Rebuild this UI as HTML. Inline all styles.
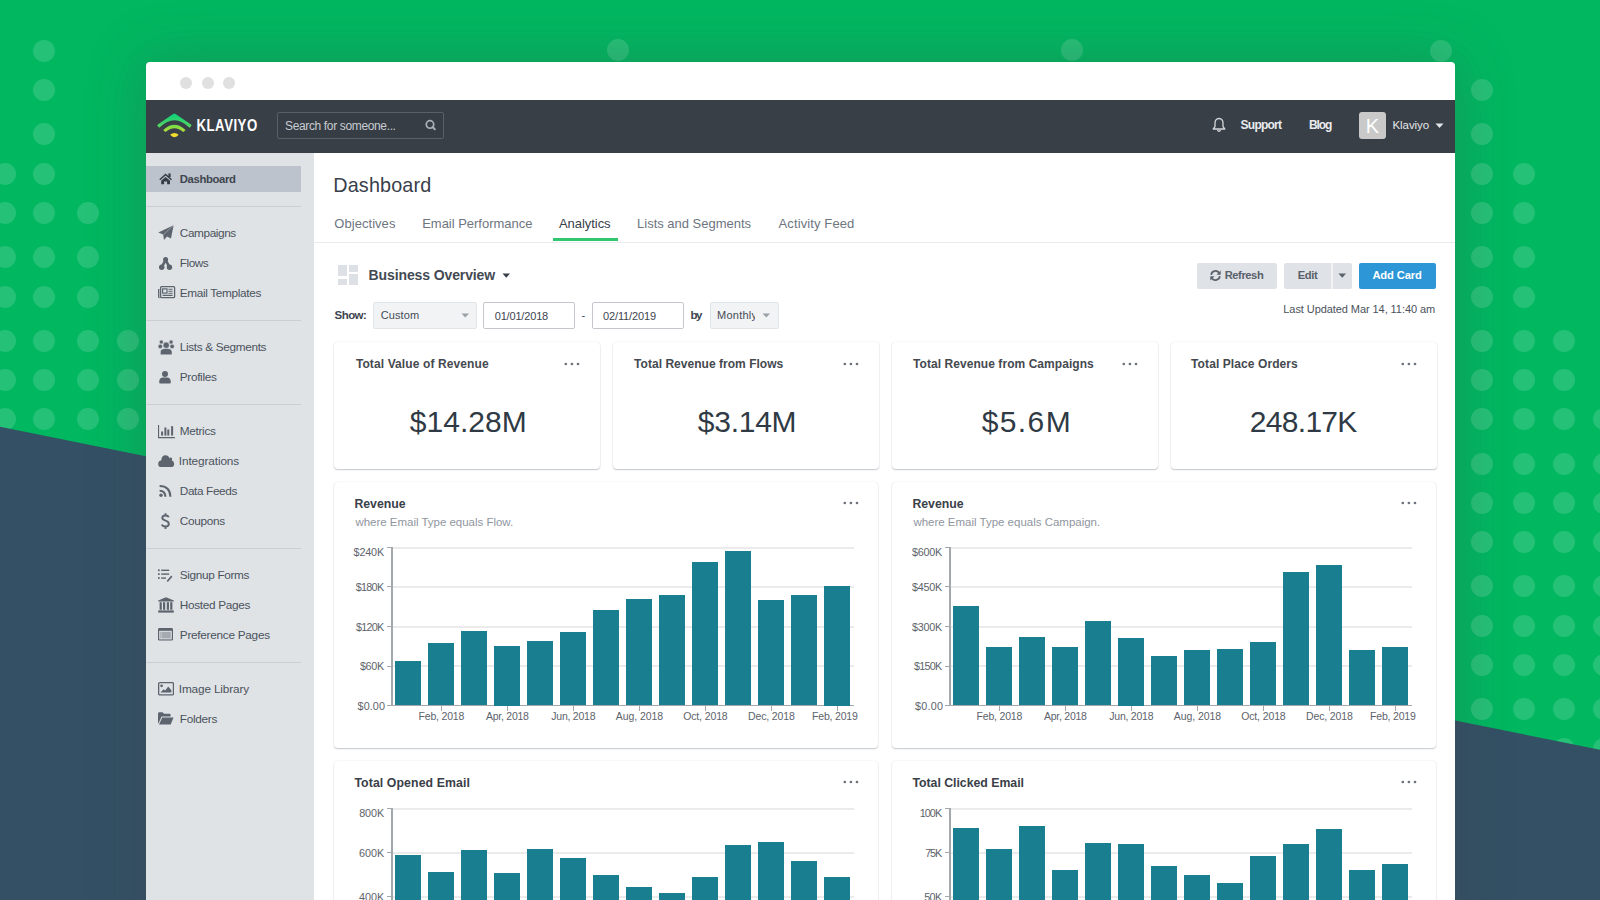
<!DOCTYPE html>
<html><head><meta charset='utf-8'><title>Klaviyo Dashboard</title>
<style>
html,body{margin:0;padding:0;}
body{width:1600px;height:900px;overflow:hidden;position:relative;background:#01b760;font-family:"Liberation Sans", sans-serif;}
.t{position:absolute;white-space:nowrap;font-family:"Liberation Sans", sans-serif;}
</style></head><body>
<svg width='1600' height='900' style='position:absolute;left:0;top:0'>
<g fill='#ffffff' fill-opacity='0.145'><circle cx='44' cy='51' r='11'/><circle cx='44' cy='90' r='11'/><circle cx='44' cy='134' r='11'/><circle cx='5' cy='174' r='11'/><circle cx='44' cy='174' r='11'/><circle cx='5' cy='213' r='11'/><circle cx='44' cy='213' r='11'/><circle cx='88' cy='213' r='11'/><circle cx='5' cy='257' r='11'/><circle cx='44' cy='257' r='11'/><circle cx='88' cy='257' r='11'/><circle cx='5' cy='297' r='11'/><circle cx='44' cy='297' r='11'/><circle cx='88' cy='297' r='11'/><circle cx='5' cy='341' r='11'/><circle cx='44' cy='341' r='11'/><circle cx='88' cy='341' r='11'/><circle cx='128' cy='341' r='11'/><circle cx='5' cy='380' r='11'/><circle cx='44' cy='380' r='11'/><circle cx='88' cy='380' r='11'/><circle cx='128' cy='380' r='11'/><circle cx='5' cy='419' r='11'/><circle cx='44' cy='419' r='11'/><circle cx='88' cy='419' r='11'/><circle cx='128' cy='419' r='11'/><circle cx='1482' cy='90' r='11'/><circle cx='1482' cy='134' r='11'/><circle cx='1482' cy='174' r='11'/><circle cx='1524' cy='174' r='11'/><circle cx='1482' cy='213' r='11'/><circle cx='1524' cy='213' r='11'/><circle cx='1482' cy='257' r='11'/><circle cx='1524' cy='257' r='11'/><circle cx='1482' cy='297' r='11'/><circle cx='1524' cy='297' r='11'/><circle cx='1482' cy='341' r='11'/><circle cx='1524' cy='341' r='11'/><circle cx='1564' cy='341' r='11'/><circle cx='1482' cy='380' r='11'/><circle cx='1524' cy='380' r='11'/><circle cx='1564' cy='380' r='11'/><circle cx='1482' cy='419' r='11'/><circle cx='1524' cy='419' r='11'/><circle cx='1564' cy='419' r='11'/><circle cx='1604' cy='419' r='11'/><circle cx='1482' cy='464' r='11'/><circle cx='1524' cy='464' r='11'/><circle cx='1564' cy='464' r='11'/><circle cx='1604' cy='464' r='11'/><circle cx='1482' cy='503' r='11'/><circle cx='1524' cy='503' r='11'/><circle cx='1564' cy='503' r='11'/><circle cx='1604' cy='503' r='11'/><circle cx='1482' cy='542' r='11'/><circle cx='1524' cy='542' r='11'/><circle cx='1564' cy='542' r='11'/><circle cx='1604' cy='542' r='11'/><circle cx='1482' cy='586' r='11'/><circle cx='1524' cy='586' r='11'/><circle cx='1564' cy='586' r='11'/><circle cx='1604' cy='586' r='11'/><circle cx='1482' cy='626' r='11'/><circle cx='1524' cy='626' r='11'/><circle cx='1564' cy='626' r='11'/><circle cx='1604' cy='626' r='11'/><circle cx='1482' cy='665' r='11'/><circle cx='1524' cy='665' r='11'/><circle cx='1564' cy='665' r='11'/><circle cx='1604' cy='665' r='11'/><circle cx='1482' cy='709' r='11'/><circle cx='1524' cy='709' r='11'/><circle cx='1564' cy='709' r='11'/><circle cx='1604' cy='709' r='11'/><circle cx='1482' cy='749' r='11'/><circle cx='1524' cy='749' r='11'/><circle cx='1564' cy='749' r='11'/><circle cx='1604' cy='749' r='11'/><circle cx='618' cy='50' r='11'/><circle cx='1072' cy='50' r='11'/><circle cx='1441' cy='51' r='11'/></g>
<polygon points='0,426.8 1600,749.8 1600,900 0,900' fill='#335064'/>
</svg><div style='position:absolute;left:146px;top:62px;width:1309px;height:900px;background:#fff;border-radius:4px 4px 0 0;box-shadow:0 0 55px 3px rgba(72,72,76,0.27)'></div><div style='position:absolute;left:180px;top:77px;width:12px;height:12px;border-radius:50%;background:#e0e0e0'></div><div style='position:absolute;left:202px;top:77px;width:12px;height:12px;border-radius:50%;background:#e0e0e0'></div><div style='position:absolute;left:223px;top:77px;width:12px;height:12px;border-radius:50%;background:#e0e0e0'></div><div style='position:absolute;left:146px;top:100px;width:1309px;height:52.5px;background:#393f47'></div><svg width='40' height='30' viewBox='0 0 40 30' style='position:absolute;left:155px;top:110px'>
<defs><linearGradient id='lg1' x1='0' y1='0' x2='0' y2='1'><stop offset='0' stop-color='#0bd17c'/><stop offset='1' stop-color='#5ad65e'/></linearGradient>
<linearGradient id='lg2' x1='0' y1='0' x2='0' y2='1'><stop offset='0' stop-color='#6fd84a'/><stop offset='1' stop-color='#b9e03a'/></linearGradient></defs>
<path d='M19.4 3.6 Q20 3.6 20.6 4 L36 14.4 Q37 15.2 36.2 16 L34.6 17.7 Q27 10.5 19.4 10.3 Q11.8 10.5 4.2 17.7 L2.6 16 Q1.8 15.2 2.8 14.4 L18.2 4 Q18.8 3.6 19.4 3.6 Z' fill='url(#lg1)'/>
<path d='M8.2 19.9 Q19.4 9.4 30.6 19.9 L28.4 22.1 Q19.4 14.4 10.4 22.1 Z' fill='url(#lg2)'/>
<path d='M15.1 24.7 Q19.4 21.3 23.7 24.7 Q21.8 26.9 19.4 27.3 Q17 26.9 15.1 24.7 Z' fill='#f1df2c'/>
</svg><div class='t' style='left:196.50px;top:119.78px;font-size:13.2px;line-height:13.2px;font-weight:700;color:#ffffff;letter-spacing:0.504px;transform:scaleY(1.22);transform-origin:0 11.22px;'>KLAVIYO</div><div style='position:absolute;left:277px;top:112px;width:165px;height:25px;border:1px solid #59606a;border-radius:2px;background:#373d45'></div><div class='t' style='left:285.00px;top:119.90px;font-size:12px;line-height:12px;font-weight:400;color:#c8ccd1;letter-spacing:-0.356px;'>Search for someone...</div><svg width='14' height='14' viewBox='0 0 14 14' style='position:absolute;left:424px;top:118px'>
<circle cx='6' cy='6.4' r='3.7' fill='none' stroke='#a9aeb5' stroke-width='1.8'/><line x1='8.6' y1='9' x2='10.8' y2='11.2' stroke='#a9aeb5' stroke-width='2' stroke-linecap='round'/></svg><svg width='14' height='16' viewBox='0 0 14 16' style='position:absolute;left:1212px;top:117px'>
<path d='M7 1.5 C4.2 1.5 3 3.6 3 6 L3 9.6 L1.2 12 L12.8 12 L11 9.6 L11 6 C11 3.6 9.8 1.5 7 1.5 Z' fill='none' stroke='#d5d8dc' stroke-width='1.3' stroke-linejoin='round'/>
<path d='M5.4 13.2 Q7 15.4 8.6 13.2' fill='none' stroke='#d5d8dc' stroke-width='1.3'/></svg><div class='t' style='left:1240.60px;top:119.30px;font-size:12px;line-height:12px;font-weight:700;color:#e9ebee;letter-spacing:-0.766px;'>Support</div><div class='t' style='left:1309.00px;top:119.30px;font-size:12px;line-height:12px;font-weight:700;color:#e9ebee;letter-spacing:-1.110px;'>Blog</div><div style='position:absolute;left:1359px;top:112px;width:27px;height:27px;border-radius:3px;background:#c9c9c9'></div><div class='t' style='left:1359px;top:113px;width:27px;text-align:center;font-size:20px;line-height:26px;font-weight:400;color:#fff'>K</div><div class='t' style='left:1392.50px;top:119.72px;font-size:11.5px;line-height:11.5px;font-weight:400;color:#e3e6e9;letter-spacing:-0.063px;'>Klaviyo</div><svg width='10' height='6' style='position:absolute;left:1434.5px;top:122.5px'><path d='M0.5 0.5 L8.5 0.5 L4.5 5 Z' fill='#e3e6e9'/></svg><div style='position:absolute;left:146px;top:152.5px;width:168px;height:747.5px;background:#dfe3e6'></div><div style='position:absolute;left:146px;top:166px;width:155px;height:26px;background:#bcc3cc'></div><div style='position:absolute;left:146px;top:206px;width:155px;height:1px;background:#c9ced4'></div><div style='position:absolute;left:146px;top:320px;width:155px;height:1px;background:#c9ced4'></div><div style='position:absolute;left:146px;top:404px;width:155px;height:1px;background:#c9ced4'></div><div style='position:absolute;left:146px;top:548px;width:155px;height:1px;background:#c9ced4'></div><div style='position:absolute;left:146px;top:662px;width:155px;height:1px;background:#c9ced4'></div><div class='t' style='left:179.80px;top:173.90px;font-size:11.3px;line-height:11.3px;font-weight:700;color:#3e454e;letter-spacing:-0.351px;'>Dashboard</div><div class='t' style='left:179.80px;top:227.87px;font-size:11.8px;line-height:11.8px;font-weight:400;color:#4b525c;letter-spacing:-0.409px;'>Campaigns</div><div class='t' style='left:179.80px;top:257.87px;font-size:11.8px;line-height:11.8px;font-weight:400;color:#4b525c;letter-spacing:-0.477px;'>Flows</div><div class='t' style='left:179.80px;top:287.87px;font-size:11.8px;line-height:11.8px;font-weight:400;color:#4b525c;letter-spacing:-0.346px;'>Email Templates</div><div class='t' style='left:179.80px;top:341.87px;font-size:11.8px;line-height:11.8px;font-weight:400;color:#4b525c;letter-spacing:-0.340px;'>Lists &amp; Segments</div><div class='t' style='left:179.80px;top:371.87px;font-size:11.8px;line-height:11.8px;font-weight:400;color:#4b525c;letter-spacing:-0.334px;'>Profiles</div><div class='t' style='left:179.80px;top:425.87px;font-size:11.8px;line-height:11.8px;font-weight:400;color:#4b525c;letter-spacing:-0.319px;'>Metrics</div><div class='t' style='left:178.80px;top:455.87px;font-size:11.8px;line-height:11.8px;font-weight:400;color:#4b525c;letter-spacing:-0.113px;'>Integrations</div><div class='t' style='left:179.80px;top:485.87px;font-size:11.8px;line-height:11.8px;font-weight:400;color:#4b525c;letter-spacing:-0.387px;'>Data Feeds</div><div class='t' style='left:179.80px;top:515.87px;font-size:11.8px;line-height:11.8px;font-weight:400;color:#4b525c;letter-spacing:-0.304px;'>Coupons</div><div class='t' style='left:179.80px;top:569.87px;font-size:11.8px;line-height:11.8px;font-weight:400;color:#4b525c;letter-spacing:-0.339px;'>Signup Forms</div><div class='t' style='left:179.80px;top:599.87px;font-size:11.8px;line-height:11.8px;font-weight:400;color:#4b525c;letter-spacing:-0.310px;'>Hosted Pages</div><div class='t' style='left:179.80px;top:629.87px;font-size:11.8px;line-height:11.8px;font-weight:400;color:#4b525c;letter-spacing:-0.276px;'>Preference Pages</div><div class='t' style='left:178.80px;top:683.87px;font-size:11.8px;line-height:11.8px;font-weight:400;color:#4b525c;letter-spacing:-0.152px;'>Image Library</div><div class='t' style='left:179.80px;top:713.87px;font-size:11.8px;line-height:11.8px;font-weight:400;color:#4b525c;letter-spacing:-0.306px;'>Folders</div><div style='position:absolute;left:158.5px;top:172.8px;line-height:0'><svg width='14' height='12' viewBox='0 0 14 12'><path d='M0.3 6.3 L6.6 0.6 L13 6.3 L12 7.3 L6.6 2.6 L1.3 7.3 Z' fill='#363d47'/><rect x='9.4' y='0.4' width='2.2' height='3.6' fill='#363d47'/><path d='M2.2 7.7 L6.6 3.9 L11 7.7 L11 11.3 L8.1 11.3 L8.1 8.4 L5.1 8.4 L5.1 11.3 L2.2 11.3 Z' fill='#363d47'/></svg></div><div style='position:absolute;left:157.5px;top:225.3px;line-height:0'><svg width='17' height='16' viewBox='0 0 17 16'><path d='M15.6 0.2 L0.3 7.6 L5.2 9.4 L6 15 L9 11.6 L13 13.6 Z' fill='#5d646e'/><path d='M15.6 0.2 L5.6 9.6' stroke='#dfe3e6' stroke-width='0.7' opacity='0.6'/></svg></div><div style='position:absolute;left:158.8px;top:256.8px;line-height:0'><svg width='14' height='14' viewBox='0 0 14 14'><circle cx='6.6' cy='2.6' r='2.5' fill='#5d646e'/><circle cx='2.7' cy='10.3' r='2.7' fill='#5d646e'/><circle cx='10.5' cy='10.3' r='2.7' fill='#5d646e'/><path d='M6.6 2.8 L2.7 10.3 M6.6 2.8 L10.5 10.3' stroke='#5d646e' stroke-width='2.6'/></svg></div><div style='position:absolute;left:157.8px;top:286.3px;line-height:0'><svg width='18' height='13' viewBox='0 0 18 13'><rect x='2.6' y='0.7' width='14' height='11' rx='1' fill='none' stroke='#5d646e' stroke-width='1.3'/><path d='M0.7 3 L0.7 10.9 Q0.7 11.7 1.6 11.7' fill='none' stroke='#5d646e' stroke-width='1.3'/><rect x='4.6' y='2.9' width='4.4' height='4.2' fill='none' stroke='#5d646e' stroke-width='1.2'/><path d='M10.4 3.3 H14.6 M10.4 5.3 H14.6 M10.4 7.3 H14.6 M4.6 9.4 H14.6' stroke='#5d646e' stroke-width='1.1'/></svg></div><div style='position:absolute;left:157.6px;top:339.6px;line-height:0'><svg width='17' height='15' viewBox='0 0 17 15'><g fill='#5d646e' stroke='#dfe3e6' stroke-width='0.5'><circle cx='3.3' cy='2.1' r='2'/><circle cx='13.1' cy='2.1' r='2'/><circle cx='2.3' cy='6.4' r='2.2'/><circle cx='14.1' cy='6.4' r='2.2'/><circle cx='8.2' cy='5.2' r='3.1'/><path d='M2.4 14.8 L2.4 11.9 Q2.4 8.5 8.2 8.5 Q14 8.5 14 11.9 L14 14.8 Z'/></g></svg></div><div style='position:absolute;left:159.2px;top:370.6px;line-height:0'><svg width='12' height='13' viewBox='0 0 12 13'><circle cx='6' cy='3.1' r='3' fill='#5d646e'/><path d='M0.2 11 Q0.2 6.6 4 6.5 L8 6.5 Q11.8 6.6 11.8 11 L11.8 11.6 Q11.8 12.6 10.8 12.6 L1.2 12.6 Q0.2 12.6 0.2 11.6 Z' fill='#5d646e'/></svg></div><div style='position:absolute;left:157.8px;top:424.6px;line-height:0'><svg width='17' height='14' viewBox='0 0 17 14'><path d='M0.55 0 V12.6 H16.9' fill='none' stroke='#5d646e' stroke-width='1.1'/><rect x='3.1' y='6.5' width='2' height='4.1' fill='#5d646e'/><rect x='6.4' y='2.5' width='2' height='8.1' fill='#5d646e'/><rect x='9.3' y='4.5' width='2' height='6.1' fill='#5d646e'/><rect x='13.1' y='1.2' width='2' height='9.4' fill='#5d646e'/></svg></div><div style='position:absolute;left:157.8px;top:454.6px;line-height:0'><svg width='17' height='13' viewBox='0 0 17 13'><path d='M3.5 12.1 Q0.2 12.1 0.2 8.9 Q0.2 5.9 3.2 5.6 Q3.6 0.2 7.6 0.2 Q10.6 0.2 11.4 3.1 Q12.4 2 13.4 2.6 Q14.4 3.2 14 5.4 Q16.2 6.2 16.2 9 Q16.2 12.1 13 12.1 Z' fill='#5d646e'/></svg></div><div style='position:absolute;left:158.8px;top:484.6px;line-height:0'><svg width='13' height='13' viewBox='0 0 13 13'><circle cx='2' cy='10.2' r='1.7' fill='#5d646e'/><path d='M0.6 5.7 Q6.2 5.7 6.4 11.8' fill='none' stroke='#5d646e' stroke-width='2'/><path d='M0.6 1.1 Q11 1.1 11.4 11.8' fill='none' stroke='#5d646e' stroke-width='2'/></svg></div><div style='position:absolute;left:161px;top:512.5px;line-height:0'><svg width='9' height='16' viewBox='0 0 9 16'><path d='M7.7 4.3 Q7.1 2.5 4.5 2.5 Q1.3 2.5 1.3 4.8 Q1.3 6.8 4.5 7.6 Q7.8 8.4 7.8 11 Q7.8 13.5 4.5 13.5 Q1.5 13.5 0.9 11.5 M4.5 0.2 V2.5 M4.5 13.5 V16' fill='none' stroke='#5d646e' stroke-width='1.9'/></svg></div><div style='position:absolute;left:158.2px;top:569px;line-height:0'><svg width='15' height='14' viewBox='0 0 15 14'><rect x='0' y='0.4' width='1.7' height='1.7' fill='#5d646e'/><rect x='0' y='4.2' width='1.7' height='1.7' fill='#5d646e'/><rect x='0' y='8.2' width='1.7' height='1.7' fill='#5d646e'/><rect x='3.2' y='0.6' width='8' height='1.4' fill='#5d646e'/><rect x='3.2' y='4.4' width='8' height='1.4' fill='#5d646e'/><rect x='3.2' y='8.4' width='4.8' height='1.4' fill='#5d646e'/><path d='M8.6 11.9 L13.2 6.6 L14.4 7.8 L9.8 13 Z' fill='#5d646e'/></svg></div><div style='position:absolute;left:158px;top:597px;line-height:0'><svg width='16' height='16' viewBox='0 0 16 16'><path d='M8 0.2 L15.8 3.6 L15.8 4.6 L0.2 4.6 L0.2 3.6 Z' fill='#5d646e'/><rect x='1.6' y='5.2' width='2.2' height='7.6' fill='#5d646e'/><rect x='5' y='5.2' width='2.2' height='7.6' fill='#5d646e'/><rect x='8.8' y='5.2' width='2.2' height='7.6' fill='#5d646e'/><rect x='12.2' y='5.2' width='2.2' height='7.6' fill='#5d646e'/><rect x='0.2' y='13.4' width='15.6' height='2.2' fill='#5d646e'/></svg></div><div style='position:absolute;left:158px;top:628px;line-height:0'><svg width='15' height='13' viewBox='0 0 15 13'><rect x='0' y='0' width='15' height='12.6' rx='1.4' fill='#5d646e'/><rect x='1.2' y='2.8' width='12.6' height='8.6' fill='#dfe3e6'/><rect x='3.4' y='3.8' width='9.4' height='6.6' fill='#5d646e' fill-opacity='0.45'/><rect x='2' y='3.8' width='0.8' height='6.6' fill='#5d646e' fill-opacity='0.45'/></svg></div><div style='position:absolute;left:158.3px;top:682.2px;line-height:0'><svg width='16' height='14' viewBox='0 0 16 14'><rect x='0.65' y='0.65' width='14.8' height='12.3' rx='1.2' fill='none' stroke='#5d646e' stroke-width='1.3'/><circle cx='3.6' cy='3.8' r='1.4' fill='#5d646e'/><path d='M2.4 10.6 L5.6 7.2 L7.2 8.6 L10.2 4.6 L13.4 8.2 L13.4 10.6 Z' fill='#5d646e'/></svg></div><div style='position:absolute;left:158px;top:712px;line-height:0'><svg width='16' height='13' viewBox='0 0 16 13'><path d='M0 1.4 Q0 0.2 1.2 0.2 L4.6 0.2 L6 1.8 L11.6 1.8 Q12.6 1.8 12.6 3 L12.6 4.6 L3.6 4.6 L0.4 11.4 L0 11 Z' fill='#5d646e'/><path d='M1 12.4 L4.2 5.6 L15.6 5.6 L12.6 12.4 Z' fill='#5d646e'/></svg></div><div class='t' style='left:333.30px;top:175.67px;font-size:19.8px;line-height:19.8px;font-weight:400;color:#39404a;letter-spacing:0.141px;'>Dashboard</div><div class='t' style='left:334.30px;top:216.95px;font-size:13px;line-height:13px;font-weight:400;color:#6e757f;letter-spacing:0.046px;'>Objectives</div><div class='t' style='left:422.20px;top:216.95px;font-size:13px;line-height:13px;font-weight:400;color:#6e757f;letter-spacing:-0.019px;'>Email Performance</div><div class='t' style='left:559.00px;top:216.95px;font-size:13px;line-height:13px;font-weight:400;color:#39404a;letter-spacing:-0.052px;'>Analytics</div><div class='t' style='left:637.10px;top:216.95px;font-size:13px;line-height:13px;font-weight:400;color:#6e757f;letter-spacing:-0.016px;'>Lists and Segments</div><div class='t' style='left:778.50px;top:216.95px;font-size:13px;line-height:13px;font-weight:400;color:#6e757f;letter-spacing:0.118px;'>Activity Feed</div><div style='position:absolute;left:314px;top:242px;width:1141px;height:1px;background:#e8eaed'></div><div style='position:absolute;left:553px;top:238px;width:65px;height:3px;background:#2ec76f'></div><div style='position:absolute;left:338px;top:265.3px;width:8.7px;height:11.2px;background:#dde0e4'></div><div style='position:absolute;left:338px;top:278.8px;width:8.7px;height:6.4px;background:#dde0e4'></div><div style='position:absolute;left:349px;top:265.3px;width:8.8px;height:6.5px;background:#dde0e4'></div><div style='position:absolute;left:349px;top:274.2px;width:8.8px;height:11px;background:#dde0e4'></div><div class='t' style='left:368.60px;top:268.10px;font-size:14px;line-height:14px;font-weight:700;color:#434a53;letter-spacing:-0.113px;'>Business Overview</div><svg width='9' height='6' style='position:absolute;left:502px;top:273px'><path d='M0.5 0.5 L8 0.5 L4.25 4.8 Z' fill='#39404a'/></svg><div class='t' style='left:334.60px;top:309.73px;font-size:11.5px;line-height:11.5px;font-weight:700;color:#3e454f;letter-spacing:-0.566px;'>Show:</div><div style='position:absolute;left:373px;top:302px;width:102px;height:25px;background:#f1f3f5;border:1px solid #e2e5e8;border-radius:2px'></div><div class='t' style='left:380.70px;top:310.15px;font-size:11px;line-height:11px;font-weight:400;color:#454c56;letter-spacing:0.093px;'>Custom</div><svg width='9' height='6' style='position:absolute;left:460.5px;top:313px'><path d='M0.5 0.5 L8 0.5 L4.25 4.5 Z' fill='#9aa0a7'/></svg><div style='position:absolute;left:483px;top:302px;width:90px;height:25px;background:#fff;border:1px solid #c4c8cd;border-radius:2px'></div><div class='t' style='left:494.70px;top:310.65px;font-size:11px;line-height:11px;font-weight:400;color:#3e454f;letter-spacing:-0.171px;'>01/01/2018</div><div class='t' style='left:581.50px;top:309.65px;font-size:11px;line-height:11px;font-weight:400;color:#3e454f;'>-</div><div style='position:absolute;left:592px;top:302px;width:90px;height:25px;background:#fff;border:1px solid #c4c8cd;border-radius:2px'></div><div class='t' style='left:603.00px;top:310.65px;font-size:11px;line-height:11px;font-weight:400;color:#3e454f;letter-spacing:-0.124px;'>02/11/2019</div><div class='t' style='left:690.60px;top:309.73px;font-size:11.5px;line-height:11.5px;font-weight:700;color:#3e454f;letter-spacing:-1.625px;'>by</div><div style='position:absolute;left:710px;top:302px;width:67px;height:25px;background:#f1f3f5;border:1px solid #e2e5e8;border-radius:2px;overflow:hidden'></div><div style='position:absolute;left:717px;top:302px;width:38px;height:27px;overflow:hidden'><div class='t' style='left:0;top:8.15px;font-size:11px;line-height:11px;color:#454c56;letter-spacing:0.25px'>Monthly</div></div><svg width='9' height='6' style='position:absolute;left:762px;top:313px'><path d='M0.5 0.5 L8 0.5 L4.25 4.5 Z' fill='#9aa0a7'/></svg><div style='position:absolute;left:1197px;top:263px;width:80px;height:26px;background:#dfe2e6;border-radius:2px'></div><svg width='11' height='11' viewBox='0 0 10 10' style='position:absolute;left:1210.3px;top:269.6px'>
<path d='M1.1 4.4 A3.9 3.9 0 0 1 8.2 2.6' fill='none' stroke='#59616c' stroke-width='1.6'/><path d='M9.7 0.5 L9.7 4.3 L5.9 4.3 Z' fill='#59616c'/>
<path d='M8.9 5.6 A3.9 3.9 0 0 1 1.8 7.4' fill='none' stroke='#59616c' stroke-width='1.6'/><path d='M0.3 9.5 L0.3 5.7 L4.1 5.7 Z' fill='#59616c'/></svg><div class='t' style='left:1224.70px;top:269.98px;font-size:11.2px;line-height:11.2px;font-weight:700;color:#58606b;letter-spacing:-0.437px;'>Refresh</div><div style='position:absolute;left:1284px;top:263px;width:68px;height:26px;background:#dfe2e6;border-radius:2px'></div><div style='position:absolute;left:1331px;top:263px;width:2px;height:26px;background:#f2f3f5'></div><div class='t' style='left:1297.80px;top:269.98px;font-size:11.2px;line-height:11.2px;font-weight:700;color:#58606b;letter-spacing:-0.401px;'>Edit</div><svg width='9' height='6' style='position:absolute;left:1338px;top:272.5px'><path d='M0.5 0.5 L8 0.5 L4.25 4.8 Z' fill='#59616c'/></svg><div style='position:absolute;left:1359px;top:263px;width:77px;height:26px;background:#2d96d6;border-radius:2px'></div><div class='t' style='left:1372.40px;top:269.98px;font-size:11.2px;line-height:11.2px;font-weight:700;color:#ffffff;letter-spacing:-0.130px;'>Add Card</div><div class='t' style='left:1283.30px;top:304.15px;font-size:11px;line-height:11px;font-weight:400;color:#4b525b;letter-spacing:-0.072px;'>Last Updated Mar 14, 11:40 am</div><div style='position:absolute;left:334.1px;top:341.8px;width:266.0px;height:127.19999999999999px;background:#fff;border-radius:4px;box-shadow:0 1px 1.5px rgba(40,50,65,0.26), 0 0 1.5px rgba(40,50,65,0.12)'></div><div class='t' style='left:355.90px;top:358.10px;font-size:12px;line-height:12px;font-weight:700;color:#45494f;letter-spacing:0.105px;'>Total Value of Revenue</div><svg width='16' height='6' style='position:absolute;left:564.00px;top:361.00px'><g fill='#6d737b'><circle cx='1.8' cy='3' r='1.35'/><circle cx='7.9' cy='3' r='1.35'/><circle cx='14' cy='3' r='1.35'/></g></svg><div class='t' style='left:409.80px;top:407.00px;font-size:30px;line-height:30px;font-weight:400;color:#2f3a45;letter-spacing:0.040px;'>$14.28M</div><div style='position:absolute;left:613.0px;top:341.8px;width:266.0px;height:127.19999999999999px;background:#fff;border-radius:4px;box-shadow:0 1px 1.5px rgba(40,50,65,0.26), 0 0 1.5px rgba(40,50,65,0.12)'></div><div class='t' style='left:634.10px;top:358.10px;font-size:12px;line-height:12px;font-weight:700;color:#45494f;letter-spacing:0.031px;'>Total Revenue from Flows</div><svg width='16' height='6' style='position:absolute;left:842.90px;top:361.00px'><g fill='#6d737b'><circle cx='1.8' cy='3' r='1.35'/><circle cx='7.9' cy='3' r='1.35'/><circle cx='14' cy='3' r='1.35'/></g></svg><div class='t' style='left:697.80px;top:407.00px;font-size:30px;line-height:30px;font-weight:400;color:#2f3a45;letter-spacing:-0.255px;'>$3.14M</div><div style='position:absolute;left:892.0px;top:341.8px;width:266.0px;height:127.19999999999999px;background:#fff;border-radius:4px;box-shadow:0 1px 1.5px rgba(40,50,65,0.26), 0 0 1.5px rgba(40,50,65,0.12)'></div><div class='t' style='left:913.10px;top:358.10px;font-size:12px;line-height:12px;font-weight:700;color:#45494f;letter-spacing:0.057px;'>Total Revenue from Campaigns</div><svg width='16' height='6' style='position:absolute;left:1121.90px;top:361.00px'><g fill='#6d737b'><circle cx='1.8' cy='3' r='1.35'/><circle cx='7.9' cy='3' r='1.35'/><circle cx='14' cy='3' r='1.35'/></g></svg><div class='t' style='left:981.70px;top:407.00px;font-size:30px;line-height:30px;font-weight:400;color:#2f3a45;letter-spacing:1.403px;'>$5.6M</div><div style='position:absolute;left:1170.8999999999999px;top:341.8px;width:266.0000000000002px;height:127.19999999999999px;background:#fff;border-radius:4px;box-shadow:0 1px 1.5px rgba(40,50,65,0.26), 0 0 1.5px rgba(40,50,65,0.12)'></div><div class='t' style='left:1191.10px;top:358.10px;font-size:12px;line-height:12px;font-weight:700;color:#45494f;letter-spacing:0.089px;'>Total Place Orders</div><svg width='16' height='6' style='position:absolute;left:1400.80px;top:361.00px'><g fill='#6d737b'><circle cx='1.8' cy='3' r='1.35'/><circle cx='7.9' cy='3' r='1.35'/><circle cx='14' cy='3' r='1.35'/></g></svg><div class='t' style='left:1249.85px;top:407.00px;font-size:30px;line-height:30px;font-weight:400;color:#2f3a45;letter-spacing:-0.710px;'>248.17K</div><div style='position:absolute;left:334.2px;top:481.7px;width:543.8px;height:265.90000000000003px;background:#fff;border-radius:4px;box-shadow:0 1px 1.5px rgba(40,50,65,0.26), 0 0 1.5px rgba(40,50,65,0.12)'></div><div class='t' style='left:354.40px;top:497.75px;font-size:12.3px;line-height:12.3px;font-weight:700;color:#3a4048;letter-spacing:-0.003px;'>Revenue</div><div class='t' style='left:355.40px;top:516.52px;font-size:11.5px;line-height:11.5px;font-weight:400;color:#90969e;letter-spacing:-0.019px;'>where Email Type equals Flow.</div><svg width='16' height='6' style='position:absolute;left:842.50px;top:500.30px'><g fill='#6d737b'><circle cx='1.8' cy='3' r='1.35'/><circle cx='7.9' cy='3' r='1.35'/><circle cx='14' cy='3' r='1.35'/></g></svg><div style='position:absolute;left:392px;top:546.5px;width:462px;height:2.0px;background:#ebebeb'></div><div style='position:absolute;left:387px;top:547px;width:5px;height:1px;background:#a3a8ad'></div><div class='t' style='left:353.60px;top:546.62px;font-size:10.8px;line-height:10.8px;font-weight:400;color:#5d636b;letter-spacing:-0.180px;'>$240K</div><div style='position:absolute;left:392px;top:586.0px;width:462px;height:2.0px;background:#ebebeb'></div><div style='position:absolute;left:387px;top:586px;width:5px;height:1px;background:#a3a8ad'></div><div class='t' style='left:355.80px;top:582.12px;font-size:10.8px;line-height:10.8px;font-weight:400;color:#5d636b;letter-spacing:-0.730px;'>$180K</div><div style='position:absolute;left:392px;top:625.5px;width:462px;height:2.0px;background:#ebebeb'></div><div style='position:absolute;left:387px;top:626px;width:5px;height:1px;background:#a3a8ad'></div><div class='t' style='left:356.00px;top:621.62px;font-size:10.8px;line-height:10.8px;font-weight:400;color:#5d636b;letter-spacing:-0.780px;'>$120K</div><div style='position:absolute;left:392px;top:665.0px;width:462px;height:2.0px;background:#ebebeb'></div><div style='position:absolute;left:387px;top:666px;width:5px;height:1px;background:#a3a8ad'></div><div class='t' style='left:359.90px;top:661.12px;font-size:10.8px;line-height:10.8px;font-weight:400;color:#5d636b;letter-spacing:-0.338px;'>$60K</div><div style='position:absolute;left:392px;top:705px;width:462px;height:1px;background:#a3a8ad'></div><div style='position:absolute;left:387px;top:705px;width:5px;height:1px;background:#a3a8ad'></div><div class='t' style='left:357.60px;top:700.62px;font-size:10.8px;line-height:10.8px;font-weight:400;color:#5d636b;letter-spacing:0.072px;'>$0.00</div><div style='position:absolute;left:391px;top:547px;width:1.5px;height:159px;background:#a3a8ad'></div><div style='position:absolute;left:395.10px;top:660.70px;width:25.6px;height:44.80px;background:#1a7e91'></div><div style='position:absolute;left:428.10px;top:642.70px;width:25.6px;height:62.80px;background:#1a7e91'></div><div style='position:absolute;left:461.10px;top:630.80px;width:25.6px;height:74.70px;background:#1a7e91'></div><div style='position:absolute;left:494.10px;top:645.50px;width:25.6px;height:60.00px;background:#1a7e91'></div><div style='position:absolute;left:527.10px;top:640.80px;width:25.6px;height:64.70px;background:#1a7e91'></div><div style='position:absolute;left:560.10px;top:632.20px;width:25.6px;height:73.30px;background:#1a7e91'></div><div style='position:absolute;left:593.10px;top:610.10px;width:25.6px;height:95.40px;background:#1a7e91'></div><div style='position:absolute;left:626.10px;top:599.20px;width:25.6px;height:106.30px;background:#1a7e91'></div><div style='position:absolute;left:659.10px;top:594.60px;width:25.6px;height:110.90px;background:#1a7e91'></div><div style='position:absolute;left:692.10px;top:562.20px;width:25.6px;height:143.30px;background:#1a7e91'></div><div style='position:absolute;left:725.10px;top:550.70px;width:25.6px;height:154.80px;background:#1a7e91'></div><div style='position:absolute;left:758.10px;top:599.70px;width:25.6px;height:105.80px;background:#1a7e91'></div><div style='position:absolute;left:791.10px;top:595.10px;width:25.6px;height:110.40px;background:#1a7e91'></div><div style='position:absolute;left:824.10px;top:586.00px;width:25.6px;height:119.50px;background:#1a7e91'></div><div style='position:absolute;left:441px;top:706px;width:1px;height:5px;background:#a3a8ad'></div><div class='t' style='left:418.50px;top:711.38px;font-size:10.5px;line-height:10.5px;font-weight:400;color:#5d636b;letter-spacing:-0.181px;'>Feb, 2018</div><div style='position:absolute;left:507px;top:706px;width:1px;height:5px;background:#a3a8ad'></div><div class='t' style='left:485.90px;top:711.38px;font-size:10.5px;line-height:10.5px;font-weight:400;color:#5d636b;letter-spacing:-0.239px;'>Apr, 2018</div><div style='position:absolute;left:573px;top:706px;width:1px;height:5px;background:#a3a8ad'></div><div class='t' style='left:551.35px;top:711.38px;font-size:10.5px;line-height:10.5px;font-weight:400;color:#5d636b;letter-spacing:-0.248px;'>Jun, 2018</div><div style='position:absolute;left:639px;top:706px;width:1px;height:5px;background:#a3a8ad'></div><div class='t' style='left:615.85px;top:711.38px;font-size:10.5px;line-height:10.5px;font-weight:400;color:#5d636b;letter-spacing:-0.092px;'>Aug, 2018</div><div style='position:absolute;left:705px;top:706px;width:1px;height:5px;background:#a3a8ad'></div><div class='t' style='left:683.15px;top:711.38px;font-size:10.5px;line-height:10.5px;font-weight:400;color:#5d636b;letter-spacing:-0.123px;'>Oct, 2018</div><div style='position:absolute;left:771px;top:706px;width:1px;height:5px;background:#a3a8ad'></div><div class='t' style='left:748.10px;top:711.38px;font-size:10.5px;line-height:10.5px;font-weight:400;color:#5d636b;letter-spacing:-0.153px;'>Dec, 2018</div><div style='position:absolute;left:837px;top:706px;width:1px;height:5px;background:#a3a8ad'></div><div class='t' style='left:812.00px;top:711.38px;font-size:10.5px;line-height:10.5px;font-weight:400;color:#5d636b;letter-spacing:-0.181px;'>Feb, 2019</div><div style='position:absolute;left:892.2px;top:481.7px;width:543.8px;height:265.90000000000003px;background:#fff;border-radius:4px;box-shadow:0 1px 1.5px rgba(40,50,65,0.26), 0 0 1.5px rgba(40,50,65,0.12)'></div><div class='t' style='left:912.40px;top:497.75px;font-size:12.3px;line-height:12.3px;font-weight:700;color:#3a4048;letter-spacing:-0.003px;'>Revenue</div><div class='t' style='left:913.40px;top:516.52px;font-size:11.5px;line-height:11.5px;font-weight:400;color:#90969e;letter-spacing:-0.009px;'>where Email Type equals Campaign.</div><svg width='16' height='6' style='position:absolute;left:1400.50px;top:500.30px'><g fill='#6d737b'><circle cx='1.8' cy='3' r='1.35'/><circle cx='7.9' cy='3' r='1.35'/><circle cx='14' cy='3' r='1.35'/></g></svg><div style='position:absolute;left:950px;top:546.5px;width:462px;height:2.0px;background:#ebebeb'></div><div style='position:absolute;left:945px;top:547px;width:5px;height:1px;background:#a3a8ad'></div><div class='t' style='left:912.00px;top:546.62px;font-size:10.8px;line-height:10.8px;font-weight:400;color:#5d636b;letter-spacing:-0.280px;'>$600K</div><div style='position:absolute;left:950px;top:586.0px;width:462px;height:2.0px;background:#ebebeb'></div><div style='position:absolute;left:945px;top:586px;width:5px;height:1px;background:#a3a8ad'></div><div class='t' style='left:912.00px;top:582.12px;font-size:10.8px;line-height:10.8px;font-weight:400;color:#5d636b;letter-spacing:-0.280px;'>$450K</div><div style='position:absolute;left:950px;top:625.5px;width:462px;height:2.0px;background:#ebebeb'></div><div style='position:absolute;left:945px;top:626px;width:5px;height:1px;background:#a3a8ad'></div><div class='t' style='left:912.00px;top:621.62px;font-size:10.8px;line-height:10.8px;font-weight:400;color:#5d636b;letter-spacing:-0.280px;'>$300K</div><div style='position:absolute;left:950px;top:665.0px;width:462px;height:2.0px;background:#ebebeb'></div><div style='position:absolute;left:945px;top:666px;width:5px;height:1px;background:#a3a8ad'></div><div class='t' style='left:914.00px;top:661.12px;font-size:10.8px;line-height:10.8px;font-weight:400;color:#5d636b;letter-spacing:-0.780px;'>$150K</div><div style='position:absolute;left:950px;top:705px;width:462px;height:1px;background:#a3a8ad'></div><div style='position:absolute;left:945px;top:705px;width:5px;height:1px;background:#a3a8ad'></div><div class='t' style='left:914.90px;top:700.62px;font-size:10.8px;line-height:10.8px;font-weight:400;color:#5d636b;letter-spacing:0.247px;'>$0.00</div><div style='position:absolute;left:949px;top:547px;width:1.5px;height:159px;background:#a3a8ad'></div><div style='position:absolute;left:953.10px;top:605.70px;width:25.6px;height:99.80px;background:#1a7e91'></div><div style='position:absolute;left:986.10px;top:646.70px;width:25.6px;height:58.80px;background:#1a7e91'></div><div style='position:absolute;left:1019.10px;top:637.20px;width:25.6px;height:68.30px;background:#1a7e91'></div><div style='position:absolute;left:1052.10px;top:646.70px;width:25.6px;height:58.80px;background:#1a7e91'></div><div style='position:absolute;left:1085.10px;top:620.70px;width:25.6px;height:84.80px;background:#1a7e91'></div><div style='position:absolute;left:1118.10px;top:637.50px;width:25.6px;height:68.00px;background:#1a7e91'></div><div style='position:absolute;left:1151.10px;top:655.60px;width:25.6px;height:49.90px;background:#1a7e91'></div><div style='position:absolute;left:1184.10px;top:649.60px;width:25.6px;height:55.90px;background:#1a7e91'></div><div style='position:absolute;left:1217.10px;top:648.70px;width:25.6px;height:56.80px;background:#1a7e91'></div><div style='position:absolute;left:1250.10px;top:642.10px;width:25.6px;height:63.40px;background:#1a7e91'></div><div style='position:absolute;left:1283.10px;top:572.40px;width:25.6px;height:133.10px;background:#1a7e91'></div><div style='position:absolute;left:1316.10px;top:565.30px;width:25.6px;height:140.20px;background:#1a7e91'></div><div style='position:absolute;left:1349.10px;top:649.60px;width:25.6px;height:55.90px;background:#1a7e91'></div><div style='position:absolute;left:1382.10px;top:647.40px;width:25.6px;height:58.10px;background:#1a7e91'></div><div style='position:absolute;left:999px;top:706px;width:1px;height:5px;background:#a3a8ad'></div><div class='t' style='left:976.50px;top:711.38px;font-size:10.5px;line-height:10.5px;font-weight:400;color:#5d636b;letter-spacing:-0.181px;'>Feb, 2018</div><div style='position:absolute;left:1065px;top:706px;width:1px;height:5px;background:#a3a8ad'></div><div class='t' style='left:1043.90px;top:711.38px;font-size:10.5px;line-height:10.5px;font-weight:400;color:#5d636b;letter-spacing:-0.239px;'>Apr, 2018</div><div style='position:absolute;left:1131px;top:706px;width:1px;height:5px;background:#a3a8ad'></div><div class='t' style='left:1109.35px;top:711.38px;font-size:10.5px;line-height:10.5px;font-weight:400;color:#5d636b;letter-spacing:-0.248px;'>Jun, 2018</div><div style='position:absolute;left:1197px;top:706px;width:1px;height:5px;background:#a3a8ad'></div><div class='t' style='left:1173.85px;top:711.38px;font-size:10.5px;line-height:10.5px;font-weight:400;color:#5d636b;letter-spacing:-0.092px;'>Aug, 2018</div><div style='position:absolute;left:1263px;top:706px;width:1px;height:5px;background:#a3a8ad'></div><div class='t' style='left:1241.15px;top:711.38px;font-size:10.5px;line-height:10.5px;font-weight:400;color:#5d636b;letter-spacing:-0.123px;'>Oct, 2018</div><div style='position:absolute;left:1329px;top:706px;width:1px;height:5px;background:#a3a8ad'></div><div class='t' style='left:1306.10px;top:711.38px;font-size:10.5px;line-height:10.5px;font-weight:400;color:#5d636b;letter-spacing:-0.153px;'>Dec, 2018</div><div style='position:absolute;left:1395px;top:706px;width:1px;height:5px;background:#a3a8ad'></div><div class='t' style='left:1370.00px;top:711.38px;font-size:10.5px;line-height:10.5px;font-weight:400;color:#5d636b;letter-spacing:-0.181px;'>Feb, 2019</div><div style='position:absolute;left:334.2px;top:760.7px;width:543.8px;height:149.29999999999995px;background:#fff;border-radius:4px;box-shadow:0 1px 1.5px rgba(40,50,65,0.26), 0 0 1.5px rgba(40,50,65,0.12)'></div><div class='t' style='left:354.40px;top:777.04px;font-size:12.3px;line-height:12.3px;font-weight:700;color:#3a4048;letter-spacing:0.096px;'>Total Opened Email</div><svg width='16' height='6' style='position:absolute;left:842.50px;top:779.30px'><g fill='#6d737b'><circle cx='1.8' cy='3' r='1.35'/><circle cx='7.9' cy='3' r='1.35'/><circle cx='14' cy='3' r='1.35'/></g></svg><div style='position:absolute;left:392px;top:808.0px;width:462px;height:2.0px;background:#ebebeb'></div><div style='position:absolute;left:387px;top:808px;width:5px;height:1px;background:#a3a8ad'></div><div class='t' style='left:359.20px;top:808.12px;font-size:10.8px;line-height:10.8px;font-weight:400;color:#5d636b;letter-spacing:-0.105px;'>800K</div><div style='position:absolute;left:392px;top:851.8px;width:462px;height:2.0px;background:#ebebeb'></div><div style='position:absolute;left:387px;top:852px;width:5px;height:1px;background:#a3a8ad'></div><div class='t' style='left:359.00px;top:847.92px;font-size:10.8px;line-height:10.8px;font-weight:400;color:#5d636b;letter-spacing:-0.038px;'>600K</div><div style='position:absolute;left:392px;top:895.6px;width:462px;height:2.0px;background:#ebebeb'></div><div style='position:absolute;left:387px;top:896px;width:5px;height:1px;background:#a3a8ad'></div><div class='t' style='left:359.00px;top:891.72px;font-size:10.8px;line-height:10.8px;font-weight:400;color:#5d636b;letter-spacing:-0.038px;'>400K</div><div style='position:absolute;left:392px;top:939.4000000000001px;width:462px;height:2.0px;background:#ebebeb'></div><div style='position:absolute;left:387px;top:940px;width:5px;height:1px;background:#a3a8ad'></div><div class='t' style='left:359.00px;top:935.52px;font-size:10.8px;line-height:10.8px;font-weight:400;color:#5d636b;letter-spacing:-0.038px;'>200K</div><div style='position:absolute;left:392px;top:984px;width:462px;height:1px;background:#a3a8ad'></div><div style='position:absolute;left:387px;top:984px;width:5px;height:1px;background:#a3a8ad'></div><div class='t' style='left:378.90px;top:979.32px;font-size:10.8px;line-height:10.8px;font-weight:400;color:#5d636b;'>0</div><div style='position:absolute;left:391px;top:808px;width:1.5px;height:176px;background:#a3a8ad'></div><div style='position:absolute;left:395.10px;top:855.40px;width:25.6px;height:128.80px;background:#1a7e91'></div><div style='position:absolute;left:428.10px;top:872.30px;width:25.6px;height:111.90px;background:#1a7e91'></div><div style='position:absolute;left:461.10px;top:850.00px;width:25.6px;height:134.20px;background:#1a7e91'></div><div style='position:absolute;left:494.10px;top:873.40px;width:25.6px;height:110.80px;background:#1a7e91'></div><div style='position:absolute;left:527.10px;top:848.80px;width:25.6px;height:135.40px;background:#1a7e91'></div><div style='position:absolute;left:560.10px;top:858.40px;width:25.6px;height:125.80px;background:#1a7e91'></div><div style='position:absolute;left:593.10px;top:874.50px;width:25.6px;height:109.70px;background:#1a7e91'></div><div style='position:absolute;left:626.10px;top:887.30px;width:25.6px;height:96.90px;background:#1a7e91'></div><div style='position:absolute;left:659.10px;top:893.25px;width:25.6px;height:90.95px;background:#1a7e91'></div><div style='position:absolute;left:692.10px;top:876.75px;width:25.6px;height:107.45px;background:#1a7e91'></div><div style='position:absolute;left:725.10px;top:845.00px;width:25.6px;height:139.20px;background:#1a7e91'></div><div style='position:absolute;left:758.10px;top:841.50px;width:25.6px;height:142.70px;background:#1a7e91'></div><div style='position:absolute;left:791.10px;top:861.00px;width:25.6px;height:123.20px;background:#1a7e91'></div><div style='position:absolute;left:824.10px;top:877.10px;width:25.6px;height:107.10px;background:#1a7e91'></div><div style='position:absolute;left:892.2px;top:760.7px;width:543.8px;height:149.29999999999995px;background:#fff;border-radius:4px;box-shadow:0 1px 1.5px rgba(40,50,65,0.26), 0 0 1.5px rgba(40,50,65,0.12)'></div><div class='t' style='left:912.40px;top:777.04px;font-size:12.3px;line-height:12.3px;font-weight:700;color:#3a4048;letter-spacing:-0.013px;'>Total Clicked Email</div><svg width='16' height='6' style='position:absolute;left:1400.50px;top:779.30px'><g fill='#6d737b'><circle cx='1.8' cy='3' r='1.35'/><circle cx='7.9' cy='3' r='1.35'/><circle cx='14' cy='3' r='1.35'/></g></svg><div style='position:absolute;left:950px;top:808.0px;width:462px;height:2.0px;background:#ebebeb'></div><div style='position:absolute;left:945px;top:808px;width:5px;height:1px;background:#a3a8ad'></div><div class='t' style='left:919.65px;top:808.12px;font-size:10.8px;line-height:10.8px;font-weight:400;color:#5d636b;letter-spacing:-0.921px;'>100K</div><div style='position:absolute;left:950px;top:851.8px;width:462px;height:2.0px;background:#ebebeb'></div><div style='position:absolute;left:945px;top:852px;width:5px;height:1px;background:#a3a8ad'></div><div class='t' style='left:925.30px;top:847.92px;font-size:10.8px;line-height:10.8px;font-weight:400;color:#5d636b;letter-spacing:-1.205px;'>75K</div><div style='position:absolute;left:950px;top:895.6px;width:462px;height:2.0px;background:#ebebeb'></div><div style='position:absolute;left:945px;top:896px;width:5px;height:1px;background:#a3a8ad'></div><div class='t' style='left:924.20px;top:891.72px;font-size:10.8px;line-height:10.8px;font-weight:400;color:#5d636b;letter-spacing:-0.655px;'>50K</div><div style='position:absolute;left:950px;top:939.4000000000001px;width:462px;height:2.0px;background:#ebebeb'></div><div style='position:absolute;left:945px;top:940px;width:5px;height:1px;background:#a3a8ad'></div><div class='t' style='left:924.20px;top:935.52px;font-size:10.8px;line-height:10.8px;font-weight:400;color:#5d636b;letter-spacing:-0.655px;'>25K</div><div style='position:absolute;left:950px;top:984px;width:462px;height:1px;background:#a3a8ad'></div><div style='position:absolute;left:945px;top:984px;width:5px;height:1px;background:#a3a8ad'></div><div class='t' style='left:936.90px;top:979.32px;font-size:10.8px;line-height:10.8px;font-weight:400;color:#5d636b;'>0</div><div style='position:absolute;left:949px;top:808px;width:1.5px;height:176px;background:#a3a8ad'></div><div style='position:absolute;left:953.10px;top:828.40px;width:25.6px;height:155.80px;background:#1a7e91'></div><div style='position:absolute;left:986.10px;top:849.40px;width:25.6px;height:134.80px;background:#1a7e91'></div><div style='position:absolute;left:1019.10px;top:826.30px;width:25.6px;height:157.90px;background:#1a7e91'></div><div style='position:absolute;left:1052.10px;top:870.40px;width:25.6px;height:113.80px;background:#1a7e91'></div><div style='position:absolute;left:1085.10px;top:842.60px;width:25.6px;height:141.60px;background:#1a7e91'></div><div style='position:absolute;left:1118.10px;top:843.75px;width:25.6px;height:140.45px;background:#1a7e91'></div><div style='position:absolute;left:1151.10px;top:865.70px;width:25.6px;height:118.50px;background:#1a7e91'></div><div style='position:absolute;left:1184.10px;top:874.50px;width:25.6px;height:109.70px;background:#1a7e91'></div><div style='position:absolute;left:1217.10px;top:883.10px;width:25.6px;height:101.10px;background:#1a7e91'></div><div style='position:absolute;left:1250.10px;top:856.30px;width:25.6px;height:127.90px;background:#1a7e91'></div><div style='position:absolute;left:1283.10px;top:844.30px;width:25.6px;height:139.90px;background:#1a7e91'></div><div style='position:absolute;left:1316.10px;top:829.00px;width:25.6px;height:155.20px;background:#1a7e91'></div><div style='position:absolute;left:1349.10px;top:870.00px;width:25.6px;height:114.20px;background:#1a7e91'></div><div style='position:absolute;left:1382.10px;top:863.60px;width:25.6px;height:120.60px;background:#1a7e91'></div>
</body></html>
